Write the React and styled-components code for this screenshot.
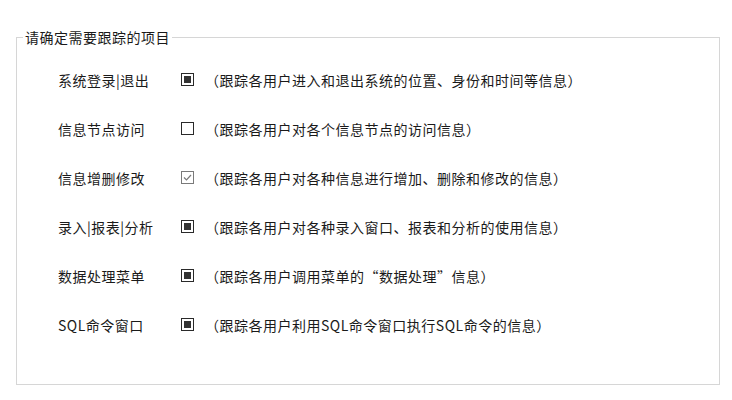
import React from "react";
import styled, { createGlobalStyle } from "styled-components";

const GlobalStyle = createGlobalStyle`
  body {
    margin: 0;
    background: #fff;
    font-family: "Noto Sans CJK SC", "Liberation Sans", sans-serif;
    color: #1a1a1a;
  }
`;

const Group = styled.fieldset`
  box-sizing: border-box;
  width: 704px;
  margin: 29px 0 0 16px;
  padding: 10px 0 35px 6px;
  border: 1px solid #d6d6d6;
`;

const Title = styled.legend`
  padding: 0 2px;
  font-size: 14px;
  line-height: 16px;
  letter-spacing: 0.5px;
`;

const List = styled.div`
  padding-left: 35px;
`;

const Row = styled.div`
  display: grid;
  grid-template-columns: 112px 13px 1fr;
  column-gap: 11px;
  align-items: center;
  height: 49px;
  font-size: 14px;
  line-height: 16px;
  letter-spacing: 0.5px;
`;

const Label = styled.span`
  white-space: nowrap;
`;

const Desc = styled.span`
  white-space: nowrap;
`;

const Box = styled.span`
  display: block;
  width: 13px;
  height: 13px;
  svg {
    display: block;
  }
`;

function Check({ state }) {
  const edge = state === "tick" ? "#7a7a7a" : "#2a2a2a";
  return (
    <Box>
      <svg width="13" height="13" viewBox="0 0 13 13">
        <rect x="0.5" y="0.5" width="12" height="12" fill="#fff" stroke={edge} />
        {state === "fill" && <rect x="3" y="3" width="7" height="7" fill="#333" />}
        {state === "tick" && (
          <path d="M3 6.5 L5.5 9 L10 4" fill="none" stroke="#7a7a7a" strokeWidth="1.2" />
        )}
      </svg>
    </Box>
  );
}

const items = [
  ["系统登录|退出", "fill", "（跟踪各用户进入和退出系统的位置、身份和时间等信息）"],
  ["信息节点访问", "empty", "（跟踪各用户对各个信息节点的访问信息）"],
  ["信息增删修改", "tick", "（跟踪各用户对各种信息进行增加、删除和修改的信息）"],
  ["录入|报表|分析", "fill", "（跟踪各用户对各种录入窗口、报表和分析的使用信息）"],
  ["数据处理菜单", "fill", "（跟踪各用户调用菜单的“数据处理”信息）"],
  ["SQL命令窗口", "fill", "（跟踪各用户利用SQL命令窗口执行SQL命令的信息）"],
];

export default function App() {
  return (
    <>
      <GlobalStyle />
      <Group>
        <Title>请确定需要跟踪的项目</Title>
        <List>
          {items.map(([label, state, desc]) => (
            <Row key={label}>
              <Label>{label}</Label>
              <Check state={state} />
              <Desc>{desc}</Desc>
            </Row>
          ))}
        </List>
      </Group>
    </>
  );
}
